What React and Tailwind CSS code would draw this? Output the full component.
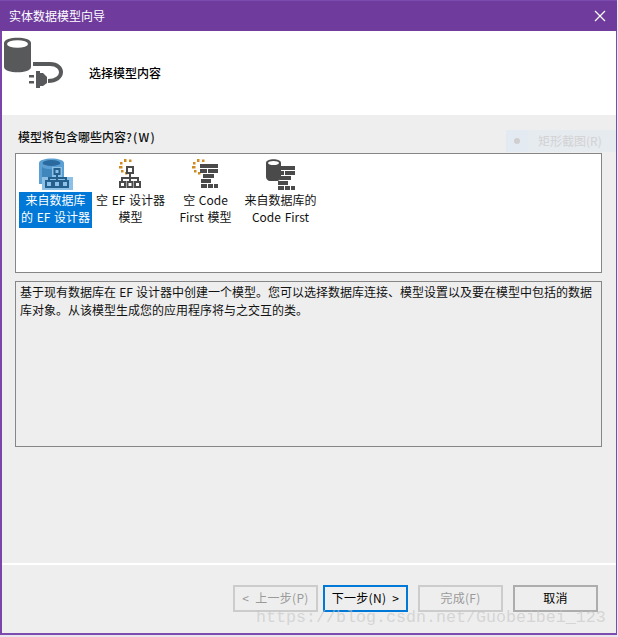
const font = { cjk: "font-['Noto_Sans_CJK_SC','Liberation_Sans',sans-serif]" }

const PlugIcon = () => (
    <svg width="64" height="57" viewBox="0 0 64 57" className="block">
        <path d="M4 7 C4 0 31 0 31 7 V31 C31 38 4 38 4 31 Z" fill="#58595b" />
        <ellipse cx="17.5" cy="8" rx="10.5" ry="3.8" fill="#fff" />
        <path d="M33 28 H50 C65 28 65 45 48 45" fill="none" stroke="#58595b" strokeWidth="4" />
        <path d="M36 35 H40 V37 H43 L47 41 V47 L43 50 H40 V52 H36 Z" fill="#58595b" />
        <rect x="29" y="39" width="5" height="2.5" fill="#58595b" />
        <rect x="29" y="45" width="5" height="2.5" fill="#58595b" />
    </svg>
)

const Sparks = () => (
    <g fill="#d08a22">
        <rect x="5" y="0" width="2.5" height="3" />
        <rect x="10" y="0.5" width="2.5" height="2.5" />
        <rect x="1" y="3" width="2.5" height="2.5" />
        <rect x="0" y="7" width="3.5" height="2.5" />
        <rect x="2" y="11" width="2.5" height="2.5" />
        <rect x="6" y="13" width="2.5" height="2.5" />
    </g>
)

const Tree = ({ color }) => (
    <g fill="none" stroke={color} strokeWidth="2">
        <rect x="8" y="7" width="6" height="6" />
        <path d="M11 13 V18 M3 22 V18 H19 V22 M11 18 V22" />
        <rect x="1" y="22" width="5" height="5" />
        <rect x="8.5" y="22" width="5" height="5" />
        <rect x="16" y="22" width="5" height="5" />
    </g>
)

const Bricks = ({ x = 0, y = 0 }) => (
    <g fill="#4a4a4a" transform={`translate(${x} ${y})`}>
        <rect x="0" y="0" width="18" height="4" />
        <rect x="0" y="5" width="7" height="4" />
        <rect x="8" y="5" width="10" height="4" />
        <rect x="3" y="10" width="11" height="4" />
        <rect x="1" y="15" width="10" height="4" />
        <rect x="1" y="20" width="6" height="4" />
        <rect x="8" y="20" width="5" height="4" />
        <rect x="14" y="20" width="4" height="4" />
    </g>
)

const DbTreeIcon = () => (
    <svg width="34" height="32" viewBox="0 0 34 32" className="block">
        <path d="M0 5 C0 -1 25 -1 25 5 V26 H0 Z" fill="#5ca0d3" />
        <ellipse cx="12.5" cy="5" rx="9" ry="3" fill="#2a6a9e" />
        <path d="M3 9 C7 12 18 12 22 9 V20 H3 Z" fill="#3f86bd" />
        <rect x="13" y="9" width="10" height="10" fill="#8cc0e6" />
        <rect x="3" y="19" width="31" height="13" fill="#8cc0e6" />
        <g fill="none" stroke="#23608e" strokeWidth="2">
            <rect x="15.5" y="11" width="5" height="5" />
            <path d="M18 16 V20 M10 23 V20 H27 V23 M18 20 V23" />
            <rect x="7" y="23" width="6" height="6" />
            <rect x="15" y="23" width="6" height="6" />
            <rect x="23" y="23" width="6" height="6" />
        </g>
    </svg>
)

const EmptyTreeIcon = () => (
    <svg width="24" height="30" viewBox="0 0 24 30" className="block">
        <Sparks />
        <g transform="translate(0 1)"><Tree color="#4a4a4a" /></g>
    </svg>
)

const EmptyCodeIcon = () => (
    <svg width="28" height="31" viewBox="0 0 28 31" className="block">
        <Sparks />
        <Bricks x="8" y="5" />
    </svg>
)

const DbCodeIcon = () => (
    <svg width="30" height="31" viewBox="0 0 30 31" className="block">
        <path d="M0 4 C0 -1 15 -1 15 4 V18 C15 21 12 22 11 22 H4 C2 22 0 20 0 18 Z" fill="#4a4a4a" />
        <ellipse cx="7.5" cy="4" rx="5.5" ry="2" fill="#fff" />
        <Bricks x="11" y="7" />
    </svg>
)

const items = [
    { lines: ['来自数据库', '的 EF 设计器'], icon: <DbTreeIcon />, selected: true },
    { lines: ['空 EF 设计器', '模型'], icon: <EmptyTreeIcon /> },
    { lines: ['空 Code', 'First 模型'], icon: <EmptyCodeIcon /> },
    { lines: ['来自数据库的', 'Code First'], icon: <DbCodeIcon /> },
]

const WizardButton = ({ label, state, className = '' }) => {
    const styles = {
        disabled: 'border-[#cccccc] text-[#9a9a9a]',
        primary: 'border-[#0078d7] text-black',
        normal: 'border-[#adadad] text-black',
    }
    return (
        <button className={`w-[85px] h-[27px] pb-[2px] border-2 bg-[#eeeeee] text-[12px] leading-none tracking-[0.3px] [word-spacing:3px] ${styles[state]} ${className}`}>
            {label}
        </button>
    )
}

export default function App() {
    return (
        <div className={`relative w-[618px] h-[637px] bg-[#e9e6ee] ${font.cjk}`}>
            <div className="w-[617px] h-[635px] flex flex-col border-l-2 border-r border-b-2 border-l-[#7a45ab] border-r-[#7d4cb0] border-b-[#7d4cb0] bg-[#eeeeee]">
                {/* Title bar */}
                <div className="h-[31px] -ml-[2px] -mr-[1px] bg-[#6f3c9e] border-t border-[#7d4cb0] flex items-center justify-between pl-[9px] pr-[11px] text-white text-[12px]">
                    <span>实体数据模型向导</span>
                    <svg width="12" height="12" viewBox="0 0 12 12">
                        <path d="M1 1 L11 11 M11 1 L1 11" stroke="#fff" strokeWidth="1.2" fill="none" />
                    </svg>
                </div>

                {/* Header */}
                <div className="h-[84px] bg-white flex items-start">
                    <div className="pt-[5px] -ml-[2px] w-[89px] shrink-0">
                        <PlugIcon />
                    </div>
                    <div className="pt-[33px] text-[12px] leading-[18px] font-medium text-black">选择模型内容</div>
                </div>

                {/* Body */}
                <div className="flex-1 flex flex-col pl-[13px] pr-[14px]">
                    <div className="h-[38px] pt-[13px] text-[12px] leading-[18px] font-medium text-[#111111] pl-[3px]">
                        模型将包含哪些内容<span className="tracking-[1.2px]">?(W)</span>
                    </div>

                    <div className="h-[120px] border border-[#868686] bg-white flex items-start pl-[2px] pt-[2px]">
                        {items.map((item) => (
                            <div key={item.lines[0]} className="w-[75px] flex flex-col items-center">
                                <div className="h-[36px] flex items-center justify-center">{item.icon}</div>
                                <div className={`pb-[3px] text-center text-[12px] leading-[17px] whitespace-nowrap [word-spacing:1px] ${item.selected ? 'bg-[#0078d7] text-white w-[73px]' : 'text-[#111111]'}`}>
                                    <div className="-mt-px">
                                        {item.lines.map((line) => (
                                            <div key={line}>{line}</div>
                                        ))}
                                    </div>
                                </div>
                            </div>
                        ))}
                    </div>

                    <div className="mt-[8px] h-[166px] border border-[#868686] bg-[#eeeeee] px-[4px] py-[1px] text-[12px] leading-[18px] text-[#111111] [word-spacing:0.5px]">
                        基于现有数据库在 EF 设计器中创建一个模型。您可以选择数据库连接、模型设置以及要在模型中包括的数据库对象。从该模型生成您的应用程序将与之交互的类。
                    </div>

                    <div className="mt-[116px] -ml-[13px] -mr-[14px] border-t-2 border-white flex justify-end gap-[5px] pt-[20px] pr-[18px]">
                        <WizardButton label="< 上一步(P)" state="disabled" />
                        <WizardButton label="下一步(N) >" state="primary" />
                        <WizardButton label="完成(F)" state="disabled" className="ml-[5px]" />
                        <WizardButton label="取消" state="normal" className="ml-[5px]" />
                    </div>
                </div>
            </div>

            {/* Leftover screenshot tool menu, sits on top of the dialog */}
            <div className="absolute left-[506px] top-[130px] w-[110px] h-[22px] bg-[#e6ebf0] flex items-center text-[12px] text-[#d2d2d2]">
                <div className="w-[22px] h-full flex items-center justify-center bg-[#e3eaf1]">
                    <div className="w-[6px] h-[6px] rounded-full bg-[#cfcfcf]" />
                </div>
                <span className="pl-[10px]">矩形截图(R)</span>
            </div>

            {/* Blog watermark */}
            <div className="absolute left-[256px] top-[607px] font-['Liberation_Mono',monospace] text-[16.67px] leading-[22px] text-[#c4c4c4]/60 whitespace-nowrap pointer-events-none">
                https://blog.csdn.net/Guobeibei_123
            </div>
        </div>
    )
}
